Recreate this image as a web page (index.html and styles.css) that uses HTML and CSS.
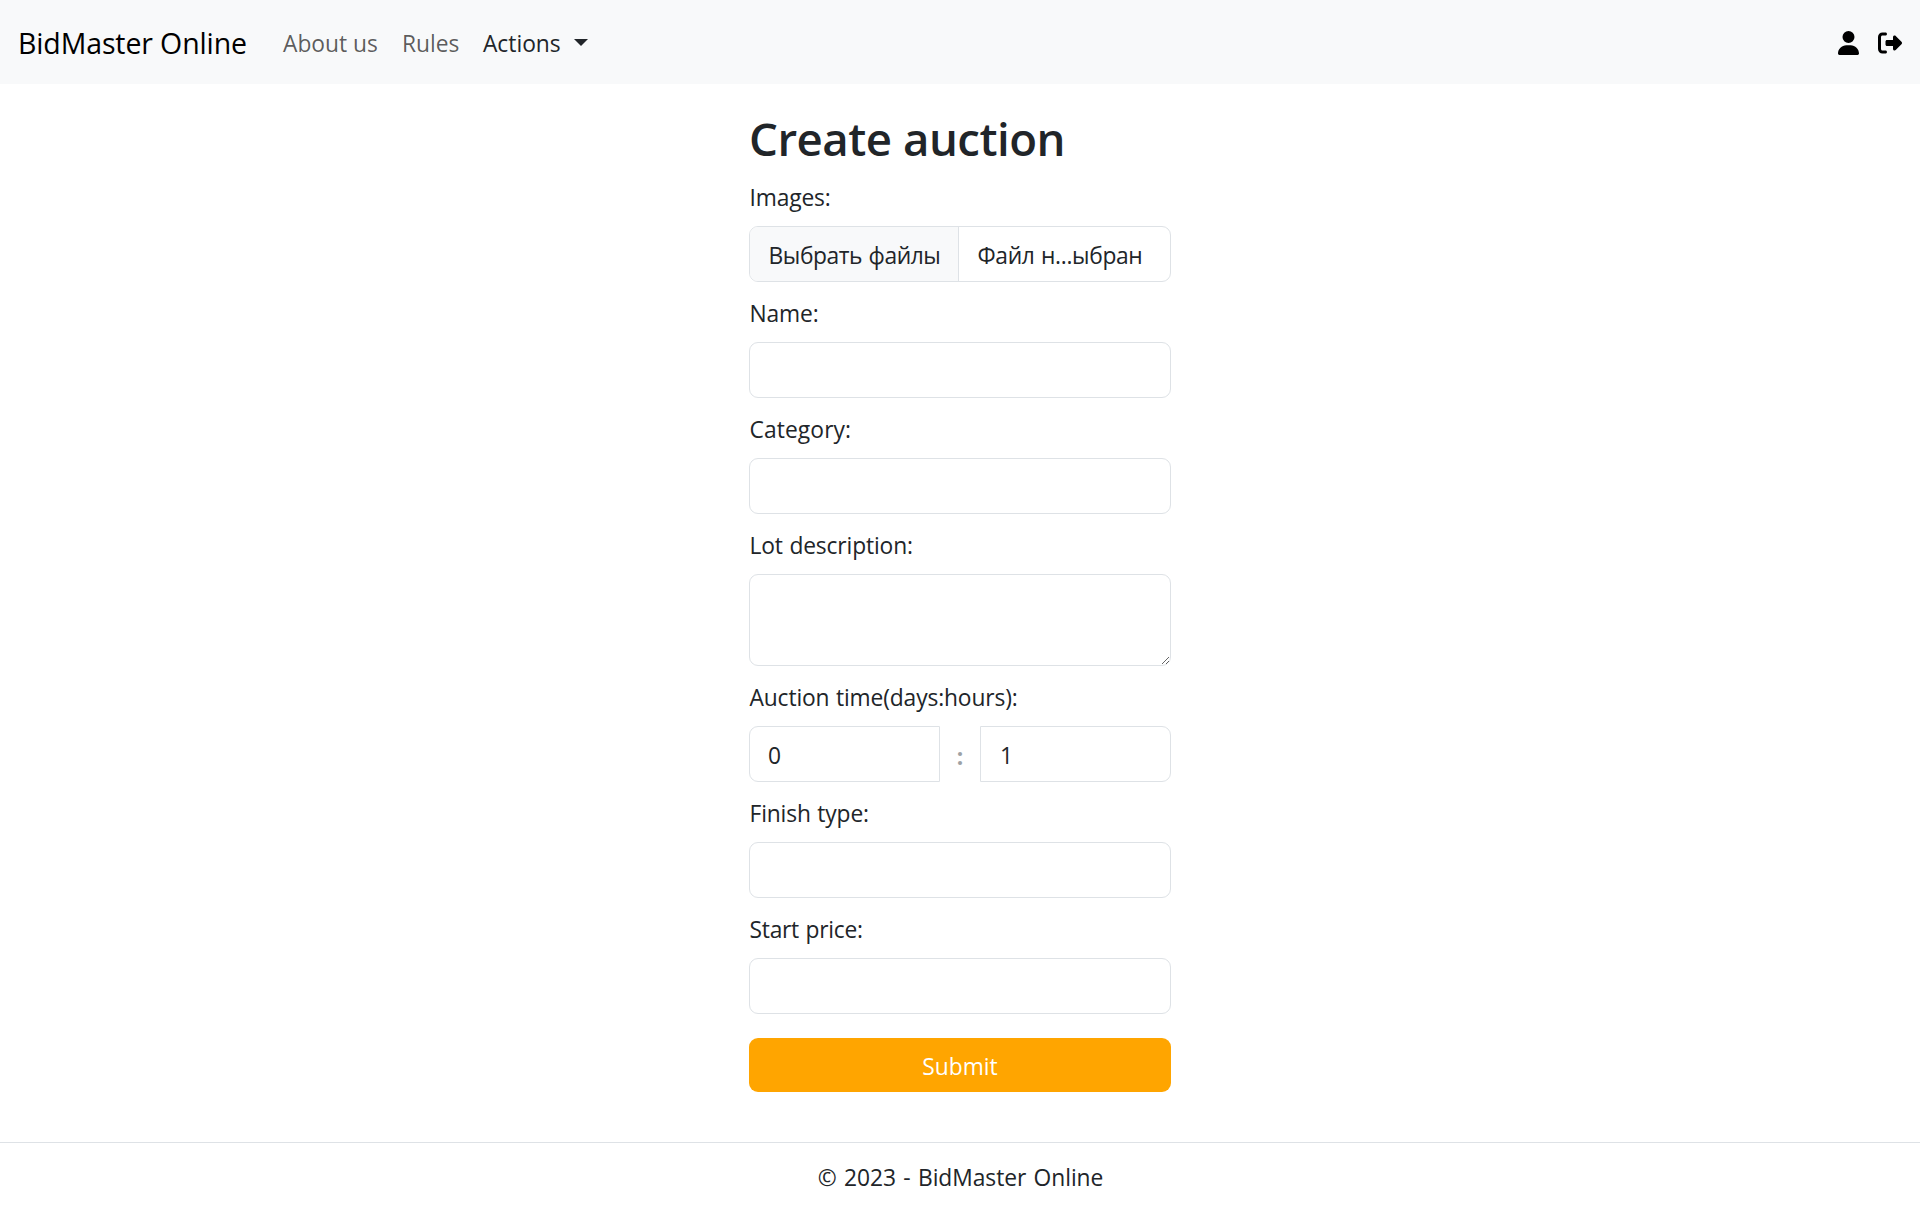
FILE: index.html
```html
<!DOCTYPE html>
<html lang="en">
<head>
<meta charset="utf-8">
<title>Create auction - BidMaster Online</title>
<link rel="stylesheet" href="styles.css">
</head>
<body>
<header class="navbar">
  <a class="brand">BidMaster Online</a>
  <nav class="nav">
    <a class="nav-link">About us</a>
    <a class="nav-link">Rules</a>
    <a class="nav-link active">Actions<span class="caret"></span></a>
  </nav>
  <div class="account">
    <svg class="icon-user" viewBox="0 0 448 512"><path d="M224 256A128 128 0 1 0 224 0a128 128 0 1 0 0 256zm-45.700 48C79.800 304 0 383.800 0 482.300C0 498.700 13.300 512 29.700 512H418.300c16.400 0 29.700-13.300 29.700-29.700C448 383.800 368.200 304 269.700 304H178.300z"/></svg>
    <svg class="icon-exit" viewBox="0 0 512 512"><path d="M377.900 105.900L500.700 228.700c7.200 7.200 11.300 17.100 11.300 27.300s-4.100 20.100-11.300 27.300L377.900 406.100c-6.400 6.400-15 9.900-24 9.900c-18.700 0-33.900-15.200-33.900-33.900l0-62.100-128 0c-17.700 0-32-14.300-32-32l0-64c0-17.700 14.300-32 32-32l128 0 0-62.100c0-18.700 15.200-33.900 33.900-33.900c9 0 17.600 3.600 24 9.900zM160 96L96 96c-17.700 0-32 14.300-32 32l0 256c0 17.700 14.300 32 32 32l64 0c17.700 0 32 14.300 32 32s-14.300 32-32 32l-64 0c-53 0-96-43-96-96L0 128C0 75 43 32 96 32l64 0c17.700 0 32 14.300 32 32s-14.300 32-32 32z"/></svg>
  </div>
</header>
<main class="page">
  <form class="form">
    <h1 class="title">Create auction</h1>
    <label class="label">Images:</label>
    <div class="control file">
      <span class="file-button">Выбрать файлы</span>
      <span class="file-name">Файл н...ыбран</span>
    </div>
    <label class="label" for="name">Name:</label>
    <input class="control" id="name">
    <label class="label wide" for="category">Category:</label>
    <input class="control" id="category">
    <label class="label" for="description">Lot description:</label>
    <textarea class="control area" id="description"></textarea>
    <label class="label" for="days">Auction time(days:hours):</label>
    <div class="time">
      <input class="control days" id="days" value="0">
      <span class="colon">:</span>
      <input class="control hours" value="1">
    </div>
    <label class="label" for="finish">Finish type:</label>
    <input class="control" id="finish">
    <label class="label tight" for="price">Start price:</label>
    <input class="control" id="price">
    <button class="submit" type="button">Submit</button>
  </form>
</main>
<footer class="footer">© 2023 - BidMaster Online</footer>
</body>
</html>
```
FILE: styles.css
```css
* { box-sizing: border-box; }
body {
  margin: 0;
  min-height: 1208px;
  display: flex;
  flex-direction: column;
  background: #fff;
  color: #212529;
  font: 22.8px/36px "Open Sans", "Noto Sans", sans-serif;
}
.navbar {
  height: 84px;
  padding: 0 18px;
  display: flex;
  align-items: center;
  background: #f8f9fa;
}
.brand {
  width: 252px;
  margin-right: 13px;
  padding-top: 2px;
  font-size: 28.5px;
  line-height: 45px;
  letter-spacing: -0.12px;
  color: #000;
}
.nav { display: flex; gap: 24px; padding-top: 3px; }
.nav-link { color: rgba(0, 0, 0, 0.65); }
.nav-link.active { margin-left: -0.5px; color: #212529; }
.caret {
  display: inline-block;
  margin-left: 13px;
  vertical-align: 6px;
  border: 7px solid transparent;
  border-top-color: #212529;
  border-bottom: 0;
}
.account { margin-left: auto; padding-top: 2px; display: flex; align-items: center; gap: 19px; }
.icon-user { width: 21px; height: 24px; }
.icon-exit { width: 24px; height: 24px; }
.page { display: flex; justify-content: center; padding-top: 24px; }
.form { width: 422px; display: flex; flex-direction: column; }
.title {
  margin: 0 0 11px;
  padding-top: 1px;
  font-size: 45.6px;
  line-height: 58px;
  font-weight: 600;
  letter-spacing: -0.5px;
}
.label { padding: 2px 0 0 0.5px; margin-bottom: 10px; letter-spacing: -0.14px; word-spacing: 0.8px; }
.label.wide { letter-spacing: 0.1px; }
.label.tight { letter-spacing: -0.25px; }
.control {
  width: 100%;
  height: 56px;
  margin: 0 0 12px;
  padding: 10px 18px 8px;
  border: 1px solid #dee2e6;
  border-radius: 9px;
  background: #fff;
  color: #212529;
  font: inherit;
}
.file { display: flex; padding: 0; overflow: hidden; white-space: nowrap; word-spacing: 1px; }
.file-button {
  width: 209px;
  padding: 11px 0 7px 18.500px;
  border-right: 1px solid #dee2e6;
  background: #f8f9fa;
  letter-spacing: -0.43px;
}
.file-name { padding: 11px 0 7px 18.500px; letter-spacing: -0.35px; }
.area { height: 92px; resize: vertical; }
.time { display: flex; }
.days { width: 191px; border-radius: 9px 0 0 9px; }
.hours { width: 191px; border-radius: 0 9px 9px 0; padding-left: 19px; }
.colon { width: 40px; padding-top: 13px; text-align: center; font-weight: 700; color: #9da1a5; }
.submit {
  height: 54px;
  margin-top: 12px;
  padding: 3px 0 0;
  border: 0;
  border-radius: 9px;
  background: orange;
  color: #fff;
  font: inherit;
}
.footer {
  margin-top: 50px;
  padding: 17px 0 15px 1px;
  border-top: 1px solid #dee2e6;
  text-align: center;
  letter-spacing: -0.05px;
  word-spacing: 1.500px;
}
```
